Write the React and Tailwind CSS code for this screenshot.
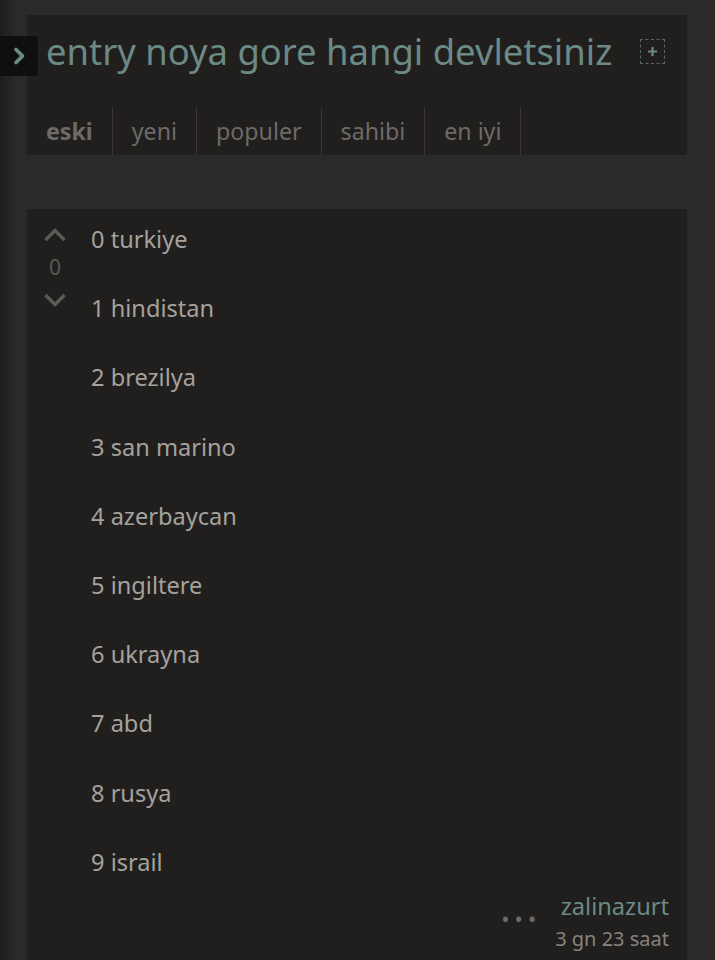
import React from 'react';

const ENTRIES = ['0 turkiye', '1 hindistan', '2 brezilya', '3 san marino', '4 azerbaycan', '5 ingiltere', '6 ukrayna', '7 abd', '8 rusya', '9 israil'];
const TABS = ['eski', 'yeni', 'populer', 'sahibi', 'en iyi'];

export default function App() {
  return (
    <div
      className="relative min-h-[960px] h-[960px] overflow-hidden bg-[#2b2a29]"
      style={{ fontFamily: '"Noto Sans", "Open Sans", sans-serif' }}
    >
      {/* sombra izquierda */}
      <div className="pointer-events-none absolute inset-y-0 left-0 w-[16px] bg-gradient-to-r from-[#1f1e1d] to-transparent" />

      <div className="relative px-[27px] pr-[28px] pt-[15px]">
        {/* cabecera */}
        <div className="bg-[#201f1e] h-[140px] flex flex-col">
          <div className="flex items-center h-[76px] pl-[19px] pr-[22px]">
            <div className="absolute left-0 top-[36px] w-[38px] h-[40px] bg-[#0f0f0e] flex items-center justify-center">
              <svg width="20" height="22" viewBox="0 0 20 22" className="-ml-[1px]">
                <path d="M7 4.5 L13.5 11 L7 17.5" fill="none" stroke="#6b8a85" strokeWidth="3.8" strokeLinecap="round" strokeLinejoin="round" />
              </svg>
            </div>
            <h1 className="text-[36.4px] leading-none text-[#6b8a85] flex-1 -mt-[3px]">entry noya gore hangi devletsiniz</h1>
            <div className="w-[25px] h-[25px] border border-dashed border-[#566b68] flex items-center justify-center -mt-[4px]">
              <svg width="13" height="13" viewBox="0 0 13 13">
                <path d="M6.5 2 V11 M2 6.5 H11" stroke="#6b8a85" strokeWidth="2.2" />
              </svg>
            </div>
          </div>
          <div className="flex mt-auto h-[47px]">
            {TABS.map((t, i) => (
              <div
                key={t}
                className={
                  'px-[19px] flex items-center text-[23.2px] text-[#6d6a67] border-r border-[#3b3837] ' +
                  (i === 0 ? 'font-bold' : '')
                }
              >
                {t}
              </div>
            ))}
          </div>
        </div>

        {/* entry */}
        <div className="bg-[#201f1e] mt-[54px] pt-[14px] pr-[18px] h-[760px]">
          <div className="flex">
            <div className="w-[56px] flex flex-col items-center pt-[4px] shrink-0">
              <svg width="24" height="16" viewBox="0 0 24 16">
                <path d="M2.5 13 L12 3.5 L21.5 13" fill="none" stroke="#5c5a57" strokeWidth="3.4" />
              </svg>
              <span className="text-[21px] leading-none text-[#5c5a57] mt-[14px]">0</span>
              <svg width="24" height="16" viewBox="0 0 24 16" className="mt-[14px]">
                <path d="M2.5 3 L12 12.5 L21.5 3" fill="none" stroke="#5c5a57" strokeWidth="3.4" />
              </svg>
            </div>
            <div className="flex flex-col pl-[8px]">
              {ENTRIES.map((e) => (
                <p key={e} className="text-[23.6px] leading-[33px] h-[69.2px] text-[#a5a19c]">{e}</p>
              ))}
            </div>
          </div>
          <div className="flex justify-end items-start gap-[14px] -mt-[24px]">
            <span className="text-[#6d6a67] text-[22px] leading-none tracking-[5px] mt-[16px]">•••</span>
            <div className="flex flex-col items-end">
              <span className="text-[23.6px] leading-[31px] text-[#6b8a85]">zalinazurt</span>
              <span className="text-[20px] leading-[28px] text-[#86827e] mt-[3px]">3 gn 23 saat</span>
            </div>
          </div>
        </div>
      </div>
    </div>
  );
}
